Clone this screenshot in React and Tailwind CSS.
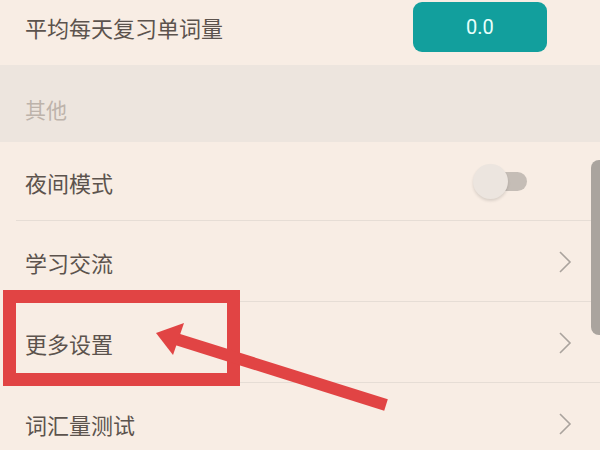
import React from 'react';

const font = { fontFamily: '"Noto Sans CJK SC", "Noto Sans", sans-serif' };

const Chevron = () => (
  <svg width="14" height="22" viewBox="0 0 14 22" className="mr-[28px]">
    <path d="M2 1 L12 11 L2 21" fill="none" stroke="#aaa39d" strokeWidth="1.6" />
  </svg>
);

const Row = ({ label, children, divider = true }) => (
  <div className="relative flex items-center justify-between h-[81px]">
    <span className="pl-[25px] text-[22px] leading-[22px] text-[#5c534d]">{label}</span>
    {children}
    {divider && <div className="absolute bottom-0 left-[16px] right-0 h-px bg-[#e6ddd5]" />}
  </div>
);

const App = () => {
  return (
    <div className="relative w-[600px] h-[450px] overflow-hidden bg-[#f8ede4]" style={font}>
      {/* top row */}
      <div className="flex items-start justify-between h-[65px] pt-[2px]">
        <span className="pl-[25px] mt-[14px] text-[22px] leading-[22px] text-[#5c534d]">平均每天复习单词量</span>
        <div className="mr-[53px] w-[134px] h-[50px] rounded-[9px] bg-[#129f9d] flex items-center justify-center text-[20px] text-[#e9fffb]" style={{ fontFamily: 'Roboto, sans-serif' }}>
          0.0
        </div>
      </div>

      {/* section header */}
      <div className="h-[77px] bg-[#ede5de] pt-[33px]">
        <span className="pl-[25px] text-[21px] leading-[22px] text-[#bdb3ab]">其他</span>
      </div>

      <div className="h-[79px] relative flex items-center justify-between">
        <span className="pl-[25px] text-[22px] leading-[22px] text-[#5c534d]">夜间模式</span>
        <div className="relative mr-[73px] w-[54px] h-[36px] flex items-center">
          <div className="absolute right-0 w-[40px] h-[19px] rounded-full bg-[#c5bdb6]" />
          <div className="absolute left-0 w-[35px] h-[35px] rounded-full bg-[#ece5df] shadow-[0_2px_3px_rgba(0,0,0,0.12)]" />
        </div>
        <div className="absolute bottom-0 left-[16px] right-0 h-px bg-[#e6ddd5]" />
      </div>
      <Row label="学习交流"><Chevron /></Row>
      <Row label="更多设置"><Chevron /></Row>
      <Row label="词汇量测试" divider={false}><Chevron /></Row>

      {/* scrollbar */}
      <div className="absolute right-0 top-[160px] w-[9px] h-[175px] rounded-l-[8px] bg-[#aaa49e]" />

      {/* red annotation box */}
      <div className="absolute left-[3px] top-[290px] w-[237px] h-[96px] border-[13px] border-[#e14444]" />

      {/* arrow */}
      <svg className="absolute left-0 top-0" width="600" height="450" viewBox="0 0 600 450">
        <line x1="176" y1="339" x2="386" y2="405" stroke="#e14444" strokeWidth="12" />
        <polygon points="156,333 184,323 173,355" fill="#e14444" />
      </svg>
    </div>
  );
};

export default App;
